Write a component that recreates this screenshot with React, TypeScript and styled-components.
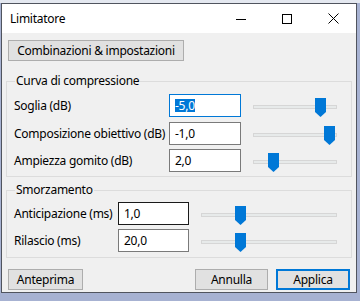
import React from "react";
import styled, { createGlobalStyle } from "styled-components";

const Global = createGlobalStyle`
  html, body { margin: 0; padding: 0; }
  body {
    background: #a7b2d2;
    font-family: "Segoe UI", "Noto Sans", "Open Sans", sans-serif;
    font-size: 12px;
    letter-spacing: -0.25px;
    color: #000;
  }
  * { box-sizing: border-box; }
`;

const Desktop = styled.div`
  width: 360px;
  height: 301px;
  padding: 3px 0 0 1px;
  overflow: hidden;
  background: linear-gradient(to bottom, #e4e8f0 0, #e4e8f0 3px, #a7b2d2 3px);
`;

const Window = styled.div`
  width: 356px;
  height: 290px;
  border: 1px solid #50545e;
  background: #f0f0f0;
  display: flex;
  flex-direction: column;
`;

const TitleBar = styled.div`
  height: 29px;
  background: #fff;
  display: flex;
  align-items: center;
  flex-shrink: 0;
`;

const Title = styled.div`
  padding-left: 8px;
  font-size: 12px;
  flex: 1;
`;

const CaptionButton = styled.div`
  width: 46px;
  height: 29px;
  display: flex;
  align-items: center;
  justify-content: center;
`;

const Body = styled.div`
  flex: 1;
  display: flex;
  flex-direction: column;
  padding: 7px 4px 0 4px;
`;

const Button = styled.div<{ $w: number; $default?: boolean }>`
  width: ${(p) => p.$w}px;
  height: 21px;
  background: #e1e1e1;
  border: ${(p) => (p.$default ? "2px solid #0078d7" : "1px solid #adadad")};
  display: flex;
  align-items: center;
  justify-content: center;
  font-size: 12px;
  line-height: 1;
`;

const TopButton = styled(Button)`
  margin-left: 2px;
`;

const Group = styled.fieldset<{ $mt: number; $pt: number; $pb: number; $gap: number }>`
  margin: ${(p) => p.$mt}px 0 0 0;
  border: 1px solid #dcdcdc;
  padding: ${(p) => p.$pt}px 0 ${(p) => p.$pb}px 7px;
  display: flex;
  flex-direction: column;
  gap: ${(p) => p.$gap}px;
  min-width: 0;
`;

const Legend = styled.legend`
  margin-left: 1px;
  padding: 0 1px;
  font-size: 12px;
  line-height: 16px;
`;

const Row = styled.div`
  display: flex;
  align-items: center;
  height: 23px;
`;

const Label = styled.div<{ $w: number }>`
  width: ${(p) => p.$w}px;
  white-space: nowrap;
  flex-shrink: 0;
`;

const TextBox = styled.div<{ $w: number; $state?: "focus" | "hover" }>`
  width: ${(p) => p.$w}px;
  height: 23px;
  background: #fff;
  border: 1px solid
    ${(p) => (p.$state === "focus" ? "#0078d7" : p.$state === "hover" ? "#1a1a1a" : "#7a7a7a")};
  padding-left: 5px;
  display: flex;
  align-items: center;
  flex-shrink: 0;
`;

const Selected = styled.span`
  background: #0078d7;
  color: #fff;
  line-height: 13px;
`;

const SliderWrap = styled.div<{ $w: number }>`
  position: relative;
  width: ${(p) => p.$w}px;
  height: 23px;
  margin-left: 12px;
  flex-shrink: 0;
`;

const Track = styled.div`
  margin-top: 11px;
  height: 4px;
  background: #e7eaea;
  border: 1px solid #d6d6d6;
`;

const ThumbBox = styled.div`
  position: absolute;
  top: 4px;
  width: 11px;
  height: 19px;
  line-height: 0;
`;

const Footer = styled.div`
  display: flex;
  align-items: center;
  margin-top: 11px;
  padding: 0 2px;
`;

const Spacer = styled.div`
  flex: 1;
`;

const Gap = styled.div`
  width: 8px;
`;

function Slider({ w, v }: { w: number; v: number }) {
  const left = Math.round(v * (w - 11));
  return (
    <SliderWrap $w={w}>
      <Track />
      <ThumbBox style={{ left }}>
        <svg width="11" height="19" viewBox="0 0 11 19">
          <path d="M0 0H11V14L5.5 19L0 14Z" fill="#0078d7" />
        </svg>
      </ThumbBox>
    </SliderWrap>
  );
}

export default function App() {
  return (
    <>
      <Global />
      <Desktop>
        <Window>
          <TitleBar>
            <Title>Limitatore</Title>
            <CaptionButton>
              <svg width="10" height="10" viewBox="0 0 10 10">
                <path d="M0 5.5H10" stroke="#000" strokeWidth="1" />
              </svg>
            </CaptionButton>
            <CaptionButton>
              <svg width="10" height="10" viewBox="0 0 10 10">
                <rect x="0.5" y="0.5" width="9" height="9" fill="none" stroke="#000" strokeWidth="1" />
              </svg>
            </CaptionButton>
            <CaptionButton>
              <svg width="11" height="11" viewBox="0 0 11 11">
                <path d="M0.5 0.5L10.5 10.5M10.5 0.5L0.5 10.5" stroke="#000" strokeWidth="1" />
              </svg>
            </CaptionButton>
          </TitleBar>
          <Body>
            <TopButton $w={176}>Combinazioni &amp; impostazioni</TopButton>

            <Group $mt={12} $pt={5} $pb={4} $gap={4.5}>
              <Legend>Curva di compressione</Legend>
              <Row>
                <Label $w={155}>Soglia (dB)</Label>
                <TextBox $w={72} $state="focus">
                  <Selected>-5,0</Selected>
                </TextBox>
                <Slider w={84} v={0.85} />
              </Row>
              <Row>
                <Label $w={155}>Composizione obiettivo (dB)</Label>
                <TextBox $w={72}>-1,0</TextBox>
                <Slider w={84} v={0.97} />
              </Row>
              <Row>
                <Label $w={155}>Ampiezza gomito (dB)</Label>
                <TextBox $w={72}>2,0</TextBox>
                <Slider w={84} v={0.2} />
              </Row>
            </Group>

            <Group $mt={5} $pt={4} $pb={5} $gap={4}>
              <Legend>Smorzamento</Legend>
              <Row>
                <Label $w={104}>Anticipazione (ms)</Label>
                <TextBox $w={71} $state="hover">1,0</TextBox>
                <Slider w={136} v={0.27} />
              </Row>
              <Row>
                <Label $w={104}>Rilascio (ms)</Label>
                <TextBox $w={71}>20,0</TextBox>
                <Slider w={136} v={0.27} />
              </Row>
            </Group>

            <Footer>
              <Button $w={75}>Anteprima</Button>
              <Spacer />
              <Button $w={73}>Annulla</Button>
              <Gap />
              <Button $w={74} $default>Applica</Button>
            </Footer>
          </Body>
        </Window>
      </Desktop>
    </>
  );
}
